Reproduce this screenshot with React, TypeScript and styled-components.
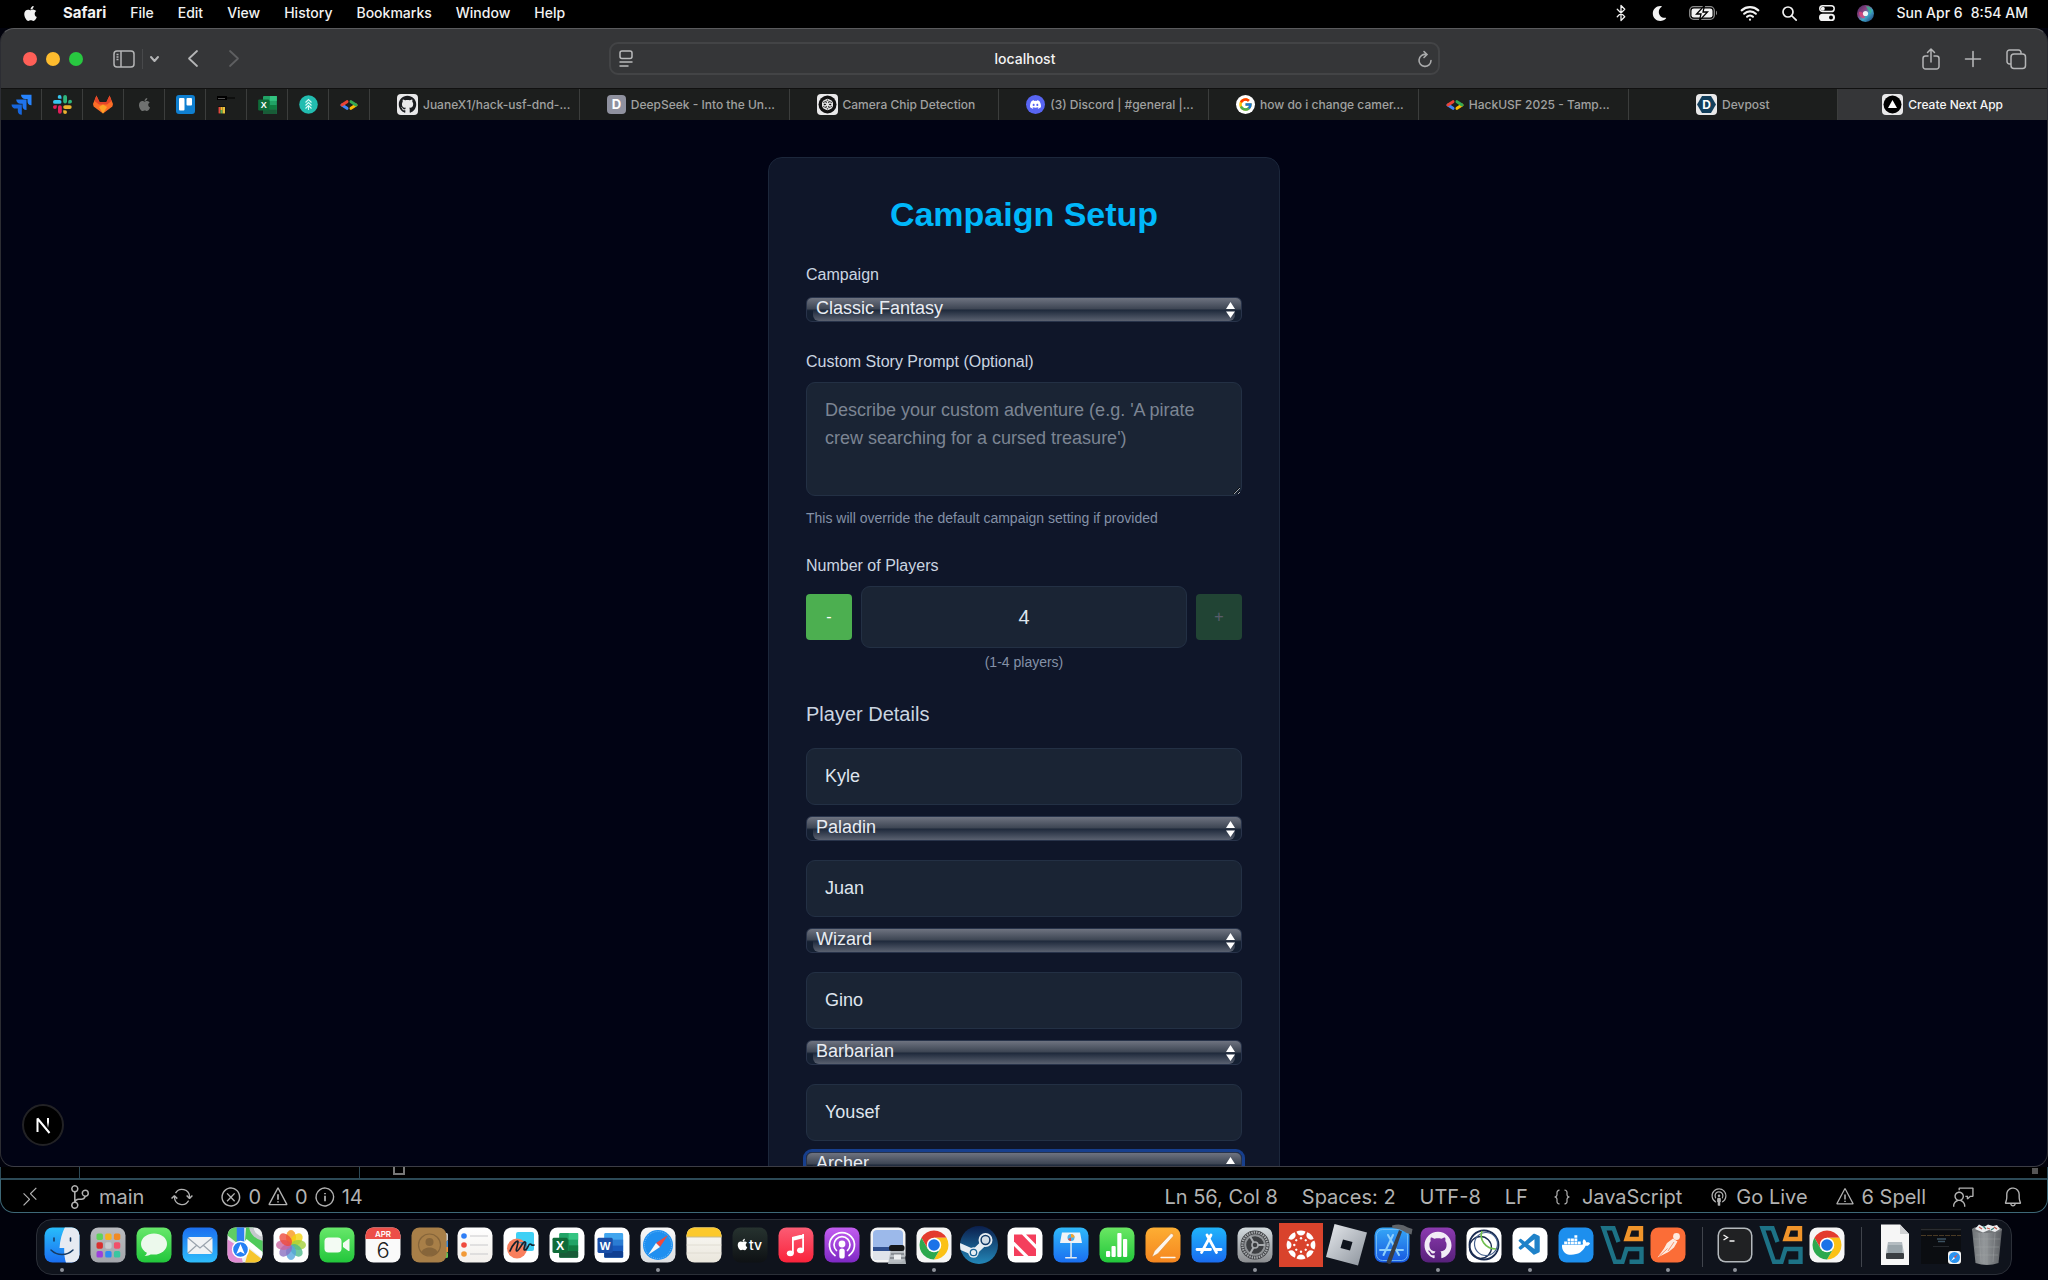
import React, { useState } from 'react';
import styled, { createGlobalStyle, css } from 'styled-components';
import { FaApple, FaMoon, FaDiscord, FaGithub, FaDocker } from 'react-icons/fa';
import { FcGoogle } from 'react-icons/fc';
import { SiGithub } from 'react-icons/si';
import { Bluetooth, Wifi } from 'lucide-react';
import {
  VscRemote,
  VscSourceControl,
  VscSync,
  VscError,
  VscWarning,
  VscInfo,
  VscBell,
  VscFeedback,
  VscBroadcast,
  VscJson,
  VscVscode,
} from 'react-icons/vsc';

const systemFont = 'Inter, "Liberation Sans", sans-serif';
const pageFont = '"Liberation Sans", Arial, sans-serif';

const GlobalStyle = createGlobalStyle`
  *, *::before, *::after { box-sizing: border-box; }
  body { margin: 0; background: #01020c; font-family: ${systemFont}; }
  button, input, select, textarea { font: inherit; color: inherit; margin: 0; }
  svg { display: block; flex: none; overflow: visible; }
`;

const Desktop = styled.div`
  display: flex;
  flex-direction: column;
  height: 100vh;
  overflow: hidden;
  background: #01020c;
`;

/* ---------- menu bar ---------- */

const MenuBar = styled.header`
  display: flex;
  justify-content: space-between;
  align-items: center;
  flex: none;
  height: 28px;
  padding: 0 20px 2px 22px;
  background: #000;
  color: #f2f2f2;
  font-size: 14px;
  font-weight: 500;
`;

const MenuGroup = styled.nav`
  display: flex;
  align-items: center;
  gap: 24px;
`;

const MenuItem = styled.button<{ $strong?: boolean }>`
  padding: 0;
  border: 0;
  background: none;
  line-height: 20px;
  font-size: ${(p) => (p.$strong ? 15 : 14)}px;
  font-weight: ${(p) => (p.$strong ? 700 : 500)};
`;

const StatusGroup = styled.div`
  display: flex;
  align-items: center;
  gap: 22px;
`;

const Clock = styled.time`
  display: flex;
  gap: 8px;
  line-height: 20px;
`;

/* ---------- browser window ---------- */

const BrowserWindow = styled.section`
  display: flex;
  flex-direction: column;
  flex: 1;
  min-height: 0;
  border: 1px solid #4b4c4e;
  border-color: #5a5b5d #2c2d33 #3c3d45;
  border-radius: 14px;
  overflow: hidden;
  background: #353638;
`;

const Toolbar = styled.div`
  display: grid;
  grid-template-columns: 1fr minmax(0, 831px) 1fr;
  align-items: center;
  flex: none;
  height: 59px;
  padding: 0 21px 0 22px;
`;

const ToolGroup = styled.div<{ $end?: boolean }>`
  display: flex;
  align-items: center;
  justify-content: ${(p) => (p.$end ? 'flex-end' : 'flex-start')};
  gap: ${(p) => (p.$end ? '25px' : '0')};
`;

const Lights = styled.div`
  display: flex;
  gap: 9px;
  margin-right: 30px;
`;

const Light = styled.button<{ $color: string }>`
  width: 14px;
  height: 14px;
  padding: 0;
  border: 0;
  border-radius: 50%;
  background: ${(p) => p.$color};
`;

const IconButton = styled.button`
  display: flex;
  padding: 0;
  border: 0;
  background: none;
  color: #b4b5b6;
`;

const ToolDivider = styled.span`
  width: 1px;
  height: 20px;
  margin: 0 7px;
  background: #48494b;
`;

const HistoryButtons = styled.div`
  display: flex;
  gap: 31px;
  margin-left: 29px;
`;

const AddressBar = styled.form`
  display: flex;
  align-items: center;
  height: 33px;
  padding: 0 5px 0 8px;
  border: 2px solid #434446;
  border-radius: 9px;
`;

const AddressInput = styled.input`
  flex: 1;
  min-width: 0;
  padding: 0;
  border: 0;
  outline: 0;
  background: none;
  color: #f3f3f3;
  font-size: 14px;
  font-weight: 500;
  line-height: 20px;
  text-align: center;
`;

const TabStrip = styled.nav`
  display: flex;
  flex: none;
  height: 32px;
  background: #1c1e1d;
  border-top: 1px solid #111;
`;

const PinnedTab = styled.button`
  display: grid;
  place-items: center;
  flex: none;
  width: 41px;
  padding: 0;
  border: 0;
  border-right: 1px solid #3b3d3c;
  background: none;
`;

const Tab = styled.button<{ $active?: boolean }>`
  display: grid;
  grid-template-columns: minmax(27px, 1fr) auto minmax(10px, 1fr);
  align-items: center;
  flex: 1 1 0;
  min-width: 0;
  padding: 0;
  border: 0;
  border-right: 1px solid #3b3d3c;
  background: ${(p) => (p.$active ? '#353638' : 'none')};
  color: ${(p) => (p.$active ? '#f5f5f5' : '#a0a1a0')};
  font-size: 12px;
  font-weight: 500;
  &:last-child { border-right: 0; }
`;

const TabBody = styled.span`
  grid-column: 2;
  display: flex;
  align-items: center;
  gap: 5px;
  white-space: nowrap;
`;

const Viewport = styled.main`
  position: relative;
  display: flex;
  justify-content: center;
  align-items: flex-start;
  flex: 1;
  min-height: 0;
  padding: 37px 16px 0;
  overflow: hidden;
  background: #010314;
  font-family: ${pageFont};
`;

const DevBadge = styled.button`
  position: absolute;
  left: 21px;
  bottom: 20px;
  display: grid;
  place-items: center;
  width: 42px;
  height: 42px;
  padding: 0;
  border: 2px solid #222225;
  border-radius: 50%;
  background: #000;
`;

/* ---------- campaign form ---------- */

const Card = styled.form`
  width: 512px;
  max-width: 100%;
  padding: 36px 37px;
  border: 1px solid #1c273b;
  border-radius: 14px;
  background: #0f1629;
  color: #cbd5e1;
`;

const Title = styled.h1`
  margin: 0 0 31px;
  color: #00b7fa;
  font-size: 34px;
  line-height: 40px;
  text-align: center;
`;

const Field = styled.div`
  display: flex;
  flex-direction: column;
  margin-bottom: 28px;
`;

const Label = styled.label`
  margin-bottom: 10px;
  font-size: 16px;
  line-height: 20px;
`;

const Hint = styled.p<{ $center?: boolean }>`
  margin: ${(p) => (p.$center ? '4px' : '12px')} 0 0;
  color: #8491a7;
  font-size: 14px;
  line-height: 20px;
  text-align: ${(p) => (p.$center ? 'center' : 'left')};
`;

const fieldBox = css`
  width: 100%;
  padding: 13px 18px;
  border: 1px solid #233044;
  border-radius: 9px;
  outline: 0;
  background: #1a2434;
  color: #dfe5ee;
  font-size: 18px;
  line-height: 28px;
`;

const Prompt = styled.textarea`
  ${fieldBox}
  display: block;
  height: 114px;
  resize: vertical;
  color-scheme: dark;
  &::placeholder { color: #7c8593; opacity: 1; }
`;

const NameInput = styled.input`
  ${fieldBox}
  height: 57px;
`;

const Stepper = styled.div`
  display: flex;
  align-items: center;
  gap: 9px;
`;

const StepButton = styled.button`
  flex: none;
  width: 46px;
  height: 46px;
  padding: 0;
  border: 0;
  border-radius: 4px;
  background: #4caf50;
  color: #fff;
  font-size: 16px;
  line-height: 20px;
  &:disabled { opacity: 0.3; }
`;

const CountInput = styled.input`
  ${fieldBox}
  flex: 1;
  min-width: 0;
  height: 62px;
  font-size: 20px;
  text-align: center;
`;

const SectionTitle = styled.h2`
  margin: 0 0 20px;
  font-size: 20px;
  font-weight: 400;
  line-height: 28px;
`;

const PlayerList = styled.div`
  display: flex;
  flex-direction: column;
  gap: 17px;
`;

const Player = styled.div`
  display: flex;
  flex-direction: column;
  gap: 9px;
`;

const SelectFrame = styled.div<{ $focused?: boolean }>`
  position: relative;
  height: 25px;
  margin: 2px 0;
  border: 1px solid #28334a;
  border-radius: 6px;
  background: linear-gradient(#6e7380, #3d4553 11px, #1d2839 12px, #152032 13px, #152032);
  ${(p) => p.$focused && 'box-shadow: 0 0 0 3px #173f8d;'}
  &::before {
    content: '';
    position: absolute;
    inset: 12px 6px 0;
    border-radius: 0 0 6px 6px;
    background: linear-gradient(#1e293b, #5a6170);
  }
`;

const Select = styled.select`
  position: relative;
  display: block;
  width: 100%;
  height: 23px;
  padding: 0 24px 3px 9px;
  border: 0;
  outline: 0;
  appearance: none;
  background: none;
  color: #e9edf3;
  font-size: 18px;
  line-height: 20px;
  option { background: #1a2434; }
`;

const SelectArrows = styled.svg`
  position: absolute;
  top: 4px;
  right: 6px;
  pointer-events: none;
`;

/* ---------- editor window behind the browser ---------- */

const EditorPeek = styled.div`
  display: flex;
  flex: none;
  height: 11px;
  border: solid #2c4a56;
  border-width: 0 1px;
  background: #000;
`;

const PeekPane = styled.div<{ $width: number }>`
  width: ${(p) => p.$width}px;
  border-right: 1px solid #2c4a56;
`;

const PeekBox = styled.div`
  width: 12px;
  height: 8px;
  margin-left: 33px;
  border: solid #777;
  border-width: 0 2px 2px;
`;

const PeekThumb = styled.div`
  width: 6px;
  height: 6px;
  margin: 1px 9px 0 auto;
  background: #555;
`;

const StatusBar = styled.footer`
  display: flex;
  justify-content: space-between;
  align-items: center;
  flex: none;
  height: 35px;
  padding: 1px 23px 0 18px;
  border: 1px solid #3d6877;
  border-top: 2px solid #2c4a56;
  border-radius: 0 0 14px 14px;
  background: #000;
  color: #b2b2b2;
  font-size: 20px;
  line-height: 24px;
`;

const StatusSide = styled.div`
  display: flex;
  align-items: center;
  gap: 27px;
`;

const DocumentInfo = styled.div`
  display: flex;
  align-items: center;
  gap: 24px;
`;

const StatusItem = styled.button<{ $gap?: number }>`
  display: flex;
  align-items: center;
  gap: ${(p) => p.$gap ?? 7}px;
  padding: 0;
  border: 0;
  background: none;
  white-space: nowrap;
`;

/* ---------- dock ---------- */

const DockBar = styled.nav`
  display: flex;
  flex: none;
  height: 56px;
  margin: 6px 36px 5px;
  padding: 0 1px 0 2px;
  border: 1px solid #2b2f38;
  border-radius: 16px;
  background: #0f131c;
`;

const DockItem = styled.button<{ $running?: boolean }>`
  display: flex;
  flex-direction: column;
  align-items: center;
  gap: 5px;
  flex: 1 1 0;
  min-width: 0;
  padding: 7px 0 0;
  border: 0;
  background: none;
  &::after {
    content: '';
    width: 4px;
    height: 4px;
    border-radius: 50%;
    background: ${(p) => (p.$running ? '#8f939b' : 'transparent')};
  }
`;

const DockDivider = styled.span`
  flex: none;
  width: 1px;
  height: 40px;
  margin: 7px 10px 0 11px;
  background: #40444c;
`;

/* ---------- drawings ---------- */

const SidebarIcon = () => (
  <svg width="22" height="18" viewBox="0 0 22 18" fill="none" stroke="currentColor" strokeWidth="1.5">
    <rect x="1" y="1" width="20" height="16" rx="3" />
    <path d="M8 1v16M3.5 4.5h2M3.5 7h2M3.5 9.5h2" />
  </svg>
);

const Chevron = ({ d, w, h, color = '#b4b5b6', sw = 1.8 }: { d: string; w: number; h: number; color?: string; sw?: number }) => (
  <svg width={w} height={h} viewBox={`0 0 ${w} ${h}`} fill="none" stroke={color} strokeWidth={sw} strokeLinecap="round" strokeLinejoin="round">
    <path d={d} />
  </svg>
);

const ReaderIcon = () => (
  <svg width="14" height="17" viewBox="0 0 14 17" fill="none" stroke="#b9babb" strokeWidth="1.5" strokeLinecap="round">
    <rect x="1" y="1" width="12" height="7.5" rx="2" />
    <path d="M1 12h12M1 16h8" />
  </svg>
);

const ReloadIcon = () => (
  <svg width="16" height="18" viewBox="0 0 16 18" fill="none" stroke="#a9aaab" strokeWidth="1.6" strokeLinecap="round">
    <path d="M9 4.5A6 6 0 1 0 14 10.5M7 1.5l3 3-3 3" />
  </svg>
);

const ShareIcon = () => (
  <svg width="18" height="22" viewBox="0 0 18 22" fill="none" stroke="currentColor" strokeWidth="1.5" strokeLinecap="round" strokeLinejoin="round">
    <path d="M6 8H3.5A2.5 2.5 0 0 0 1 10.5V18.5A2.5 2.5 0 0 0 3.5 21H14.5A2.5 2.5 0 0 0 17 18.5V10.5A2.5 2.5 0 0 0 14.5 8H12M9 14V1.5M5.5 4.5L9 1L12.5 4.5" />
  </svg>
);

const PlusIcon = () => (
  <svg width="16" height="16" viewBox="0 0 16 16" stroke="currentColor" strokeWidth="1.6" strokeLinecap="round">
    <path d="M8 .5v15M.5 8h15" />
  </svg>
);

const OverviewIcon = () => (
  <svg width="20" height="20" viewBox="0 0 20 20" fill="none" stroke="currentColor" strokeWidth="1.5">
    <rect x="5" y="5" width="14.5" height="14.5" rx="3" />
    <path d="M5 15H3.5A2.5 2.5 0 0 1 1 12.5V3.5A2.5 2.5 0 0 1 3.5 1H12.5A2.5 2.5 0 0 1 15 3.5V5" />
  </svg>
);

const BatteryIcon = () => (
  <svg width="29" height="14" viewBox="0 0 29 14">
    <rect x=".7" y=".7" width="24.6" height="12.6" rx="4" fill="none" stroke="#8b8b8b" strokeWidth="1.3" />
    <rect x="2.5" y="2.5" width="21" height="9" rx="2.3" fill="#f2f2f2" />
    <path d="M27 4.8c1.3.5 1.3 3.9 0 4.4z" fill="#8b8b8b" />
    <path d="M15.5 -.5L7.5 8H12L10.5 14.5 18.5 6H14z" fill="#f2f2f2" stroke="#000" strokeWidth="1.3" />
  </svg>
);

const SearchIcon = () => (
  <svg width="15" height="15" viewBox="0 0 15 15" fill="none" stroke="#f2f2f2" strokeWidth="1.7" strokeLinecap="round">
    <circle cx="6" cy="6" r="5" />
    <path d="M10 10l4.2 4.2" />
  </svg>
);

const ControlIcon = () => (
  <svg width="16" height="16" viewBox="0 0 16 16">
    <rect x=".8" y=".8" width="14.4" height="5.8" rx="2.9" fill="none" stroke="#f2f2f2" strokeWidth="1.5" />
    <circle cx="3.8" cy="3.7" r="2" fill="#f2f2f2" />
    <rect y="8.8" width="16" height="7.2" rx="3.6" fill="#f2f2f2" />
    <circle cx="12" cy="12.4" r="2" fill="#000" />
  </svg>
);

const SiriIcon = () => (
  <svg width="17" height="17" viewBox="0 0 17 17">
    <defs>
      <linearGradient id="siri" x1="0" y1="0" x2="1" y2="1">
        <stop offset="0" stopColor="#3b2a5e" />
        <stop offset=".35" stopColor="#8a4080" />
        <stop offset=".6" stopColor="#3fa7c8" />
        <stop offset="1" stopColor="#1b2e6e" />
      </linearGradient>
    </defs>
    <circle cx="8.5" cy="8.5" r="8.5" fill="url(#siri)" />
    <path d="M9 1c5 0 6 4 5 8-2-4-4-5-5-8z" fill="#39b58c" opacity=".8" />
    <path d="M2 7c3-1 5 1 6 6-3 1-6-1-6-6z" fill="#e0457c" opacity=".8" />
    <circle cx="8.5" cy="8.5" r="2.6" fill="#fff" opacity=".9" />
  </svg>
);

const JiraIcon = () => (
  <svg width="21" height="21" viewBox="0 0 21 21">
    <path d="M10 .8h10.5v10.5c-3 0-4-2-4-4V5h-2.3c-2.2 0-4.2-1.5-4.2-4.2z" fill="#2684ff" />
    <path d="M5.2 5.6h10.3v10.3c-3 0-4-2-4-4v-2.1H9.4c-2.2 0-4.2-1.5-4.2-4.2z" fill="#1f74ee" />
    <path d="M.5 10.4h10.3v10.3c-3 0-4-2-4-4v-2.1H4.7c-2.2 0-4.2-1.5-4.2-4.2z" fill="#1766dc" />
  </svg>
);

const SlackIcon = () => (
  <svg width="19" height="19" viewBox="0 0 19 19">
    <g fill="#36c5f0"><rect x="0" y="5" width="8.5" height="3.8" rx="1.9" /><path d="M8.5 3.8H6.6A1.9 1.9 0 1 1 8.5 1.9z" /></g>
    <g fill="#2eb67d"><rect x="10.2" y="0" width="3.8" height="8.5" rx="1.9" /><path d="M15.2 8.5V6.6A1.9 1.9 0 1 1 17.1 8.5z" /></g>
    <g fill="#ecb22e"><rect x="10.2" y="10.2" width="8.5" height="3.8" rx="1.9" /><path d="M10.2 15.2h1.9a1.9 1.9 0 1 1-1.9 1.9z" /></g>
    <g fill="#e01e5a"><rect x="5" y="10.2" width="3.8" height="8.5" rx="1.9" /><path d="M3.8 10.2v1.9A1.9 1.9 0 1 1 1.9 10.2z" /></g>
  </svg>
);

const GitlabIcon = () => (
  <svg width="20" height="19" viewBox="0 0 20 19">
    <path d="M10 18.5L.6 11.5 0 9 3.4.5 6.5 7h7L16.6.5 20 9l-.6 2.5z" fill="#fc6d26" />
    <path d="M3.4.5L6.5 7h7L16.6.5 18.5 6 14 9.5H6L1.5 6z" fill="#e24329" />
    <path d="M6 12l4-2.5 4 2.5-4 6.5z" fill="#fca326" />
  </svg>
);

const TrelloIcon = () => (
  <svg width="19" height="19" viewBox="0 0 19 19">
    <rect width="19" height="19" rx="3" fill="#0f7fd0" />
    <rect x="3" y="3" width="5.5" height="12.5" rx="1" fill="#fff" />
    <rect x="10.5" y="3" width="5.5" height="7.5" rx="1" fill="#fff" />
  </svg>
);

const SwatchIcon = () => (
  <svg width="19" height="18" viewBox="0 0 19 18">
    <rect width="10" height="4" fill="#000" />
    <path d="M1 2.5h7" stroke="#666" strokeWidth=".8" />
    <path d="M10 2h8" stroke="#000" strokeWidth="1" />
    <rect x="1" y="10" width="7.5" height="8" fill="#111" />
    <rect x="1.5" y="11" width="2" height="6.5" fill="#e04a3e" />
    <rect x="3.5" y="11" width="2" height="3" fill="#f6b62f" />
    <rect x="3.5" y="14" width="2" height="3.5" fill="#58b455" />
    <rect x="5.5" y="11" width="2.5" height="6.5" fill="#e9c23c" />
  </svg>
);

const ExcelMark = ({ x = 0, y = 0, s = 1 }: { x?: number; y?: number; s?: number }) => (
  <g transform={`translate(${x} ${y}) scale(${s})`}>
    <rect x="7" y="0" width="20" height="26" rx="1.5" fill="#21a366" />
    <rect x="17" y="0" width="10" height="7" fill="#33c481" />
    <rect x="7" y="7" width="10" height="12" fill="#107c41" />
    <rect x="7" y="19" width="20" height="7" rx="1" fill="#185c37" />
    <rect x="17" y="13" width="10" height="6" fill="#107c41" />
    <rect x="0" y="5" width="16" height="16" rx="1.5" fill="#0f6b38" />
    <text x="8" y="17.5" fontFamily="Liberation Sans" fontWeight="700" fontSize="13" fill="#fff" textAnchor="middle">X</text>
  </g>
);

const WordMark = () => (
  <g transform="translate(3.5 6) scale(.95)">
    <rect x="7" y="0" width="20" height="26" rx="1.5" fill="#41a5ee" />
    <rect x="7" y="7" width="20" height="6" fill="#2b7cd3" />
    <rect x="7" y="13" width="20" height="6" fill="#185abd" />
    <rect x="7" y="19" width="20" height="7" rx="1" fill="#103f91" />
    <rect x="0" y="5" width="16" height="16" rx="1.5" fill="#1a4fa8" />
    <text x="8" y="17.5" fontFamily="Liberation Sans" fontWeight="700" fontSize="12" fill="#fff" textAnchor="middle">W</text>
  </g>
);

const TreeIcon = () => (
  <svg width="19" height="19" viewBox="0 0 19 19" fill="none" stroke="#d7fbf5" strokeWidth="1.1">
    <circle cx="9.5" cy="9.5" r="9.3" fill="#22bdb0" stroke="none" />
    <path d="M6.5 7.5l3-3 3 3M6.5 10.5l3-3 3 3M6.5 13.5l3-3 3 3M9.5 10v5" />
  </svg>
);

const CodeMark = () => (
  <svg width="18" height="10" viewBox="0 0 18 10" fill="none" strokeWidth="3" strokeLinecap="round">
    <path d="M2 5L7 8.3" stroke="#4285f4" />
    <path d="M2 5L7 1.7" stroke="#ea4335" />
    <path d="M16 5L11 8.3" stroke="#fbbc04" />
    <path d="M16 5L11 1.7" stroke="#34a853" />
  </svg>
);

const PlateIcon = ({ children }: { children: React.ReactNode }) => (
  <svg width="21" height="21" viewBox="0 0 21 21">
    <rect width="21" height="21" rx="4" fill="#e9e9ea" />
    {children}
  </svg>
);

const Petals = ({ n, r, color, cx = 10.5, cy = 10.5 }: { n: number; r: number; color: string; cx?: number; cy?: number }) => (
  <>
    {Array.from({ length: n }, (_, i) => (
      <ellipse key={i} cx={cx} cy={cy - r * 0.5} rx={r * 0.5} ry={r * 0.45} fill="none" stroke={color} strokeWidth="1" transform={`rotate(${(360 / n) * i} ${cx} ${cy})`} />
    ))}
  </>
);

const ChromeMark = ({ cx = 18, cy = 18, r = 14.5 }: { cx?: number; cy?: number; r?: number }) => {
  const h = r * 0.866;
  const k = r / 2;
  return (
    <g transform={`translate(${cx} ${cy})`}>
      <path d={`M${-h} ${-k}A${r} ${r} 0 0 1 ${h} ${-k}L0 ${-k}L${-k * 0.866} ${k * 0.5}z`} fill="#e33b2e" />
      <path d={`M${h} ${-k}A${r} ${r} 0 0 1 0 ${r}L${k * 0.866} ${k * 0.5}L0 ${-k}z`} fill="#fbc116" />
      <path d={`M0 ${r}A${r} ${r} 0 0 1 ${-h} ${-k}L${-k * 0.866} ${k * 0.5}L${k * 0.866} ${k * 0.5}z`} fill="#2da94f" />
      <circle r={r * 0.5} fill="#fff" />
      <circle r={r * 0.4} fill="#1a73e8" />
    </g>
  );
};

const Art = ({ children }: { children: React.ReactNode }) => (
  <svg width="36" height="36" viewBox="0 0 36 36">{children}</svg>
);

const Tile = ({ id, from, to, children }: { id: string; from: string; to?: string; children?: React.ReactNode }) => (
  <Art>
    <defs>
      <linearGradient id={`t-${id}`} x1="0" y1="0" x2="0" y2="1">
        <stop offset="0" stopColor={from} />
        <stop offset="1" stopColor={to ?? from} />
      </linearGradient>
      <clipPath id={`c-${id}`}><rect x=".5" y=".5" width="35" height="35" rx="8" /></clipPath>
    </defs>
    <rect x=".5" y=".5" width="35" height="35" rx="8" fill={`url(#t-${id})`} />
    <g clipPath={`url(#c-${id})`}>{children}</g>
  </Art>
);

const SafariDial = () => (
  <>
    <circle cx="18" cy="18" r="15" fill="#1f8ff0" />
    <circle cx="18" cy="18" r="13.5" fill="none" stroke="#9ad3fb" strokeWidth="1" strokeDasharray=".6 1.5" />
    <path d="M28 8L20 20 16 16z" fill="#f0483e" />
    <path d="M8 28L20 20 16 16z" fill="#f4f6f8" />
  </>
);

const ParadigmArt = () => (
  <Art>
    <g transform="translate(-3.5 -1)" fill="none" strokeWidth="4.4">
      <path d="M18 16L13 2.2H3L14.5 35.8H22L26 23H41V35.8H29" stroke="#1d7286" />
      <path d="M26 13L29.5 2.2H40.5V13z" stroke="#f0942a" />
    </g>
  </Art>
);

const photoColors = ['#f8981d', '#f4d30e', '#a3cf3a', '#4cb98a', '#55a4dd', '#8a6fc0', '#c964a0', '#ee4b3c'];
const launchColors = ['#5fd35a', '#f5b320', '#f08a24', '#d92f2f', '#c9ccd0', '#f2506a', '#9b40dc', '#2d8cf0', '#3ac6a0'];

type DockEntry = { name: string; art: React.ReactNode; running?: boolean };

const chromeTile = (id: string) => (
  <Tile id={id} from="#f6f6f6"><ChromeMark /></Tile>
);

const mainApps: DockEntry[] = [
  { name: 'Finder', running: true, art: (
    <Tile id="finder" from="#28bdfb" to="#1a6ef0">
      <path d="M21 0H36V36H22C20.5 31 20 26 20.2 21H15.5C16 13 18 6 21 0z" fill="#e6ebf2" />
      <path d="M7 23c6 6 16 6 22 0" fill="none" stroke="#173a63" strokeWidth="1.5" strokeLinecap="round" />
      <path d="M10 11v3M26.5 11v3" stroke="#173a63" strokeWidth="1.6" strokeLinecap="round" />
    </Tile>) },
  { name: 'Launchpad', art: (
    <Tile id="launch" from="#b9bbc0" to="#a3a5ab">
      {launchColors.map((c, i) => (
        <rect key={c} x={6.5 + (i % 3) * 8.7} y={6.5 + Math.floor(i / 3) * 8.8} width="6.4" height="6.4" rx="1.6" fill={c} />
      ))}
    </Tile>) },
  { name: 'Messages', art: (
    <Tile id="msg" from="#67e86a" to="#22c63b">
      <ellipse cx="18" cy="17" rx="13" ry="10.5" fill="#ecf9ec" />
      <path d="M11 24c0 3-1 4-2.5 5 3.5 0 6-1 8-3z" fill="#ecf9ec" />
    </Tile>) },
  { name: 'Mail', art: (
    <Tile id="mail" from="#1c6ff0" to="#2fbdfb">
      <rect x="5.5" y="10" width="25" height="17" rx="2.5" fill="#f0f2f4" />
      <path d="M6 11l12 10 12-10M6 26l9-8M30 26l-9-8" fill="none" stroke="#9aa3ad" strokeWidth="1.2" />
    </Tile>) },
  { name: 'Maps', art: (
    <Tile id="maps" from="#eceff0">
      <path d="M0 0H10V16L0 8z" fill="#5fce63" />
      <path d="M0 12L12 20 16 36H0z" fill="#e08bd2" />
      <path d="M19 0H26C26 8 30 12 36 13V28L18 14z" fill="#4fca5b" />
      <path d="M22 22L36 33V36H18z" fill="#f6c52d" />
      <path d="M18 14L38 30" stroke="#fff" strokeWidth="5" />
      <path d="M24 -2a14 14 0 0 0 14 14" fill="none" stroke="#c4c8cc" strokeWidth="4" />
      <path d="M13.5 0V22" stroke="#2d7ff3" strokeWidth="7.5" />
      <circle cx="13.5" cy="22.5" r="8" fill="#2680f5" stroke="#fff" strokeWidth="1.4" />
      <path d="M13.5 17l4.2 10-4.2-2.2L9.3 27z" fill="#fff" />
    </Tile>) },
  { name: 'Photos', art: (
    <Tile id="photos" from="#fdfdfd">
      {photoColors.map((c, i) => (
        <ellipse key={c} cx="18" cy="10.5" rx="5" ry="7.5" fill={c} opacity=".8" transform={`rotate(${i * 45} 18 18)`} />
      ))}
    </Tile>) },
  { name: 'FaceTime', art: (
    <Tile id="ft" from="#67e86a" to="#22c63b">
      <rect x="5.5" y="10.5" width="17" height="15" rx="4" fill="#f3fbf3" />
      <path d="M24 16l5.5-4q1-.5 1 .6v10.8q0 1-1 .6L24 20z" fill="#f3fbf3" />
    </Tile>) },
  { name: 'Calendar', art: (
    <Tile id="cal" from="#fafafa">
      <rect width="36" height="12" fill="#ec4e48" />
      <text x="18" y="9.5" fontFamily="Inter" fontSize="8" fontWeight="600" fill="#fff" textAnchor="middle">APR</text>
      <text x="18" y="30.5" fontFamily="Inter" fontSize="22" fontWeight="300" fill="#222" textAnchor="middle">6</text>
    </Tile>) },
  { name: 'Contacts', art: (
    <Art>
      <rect x="30" y="6" width="7" height="8" rx="1.5" fill="#c8c8c8" /><rect x="30" y="14" width="7" height="6" fill="#3b8ad8" />
      <rect x="30" y="20" width="7" height="5" fill="#f0943a" /><rect x="30" y="25" width="7" height="6" rx="1.5" fill="#62c554" />
      <rect x=".5" y=".5" width="35" height="35" rx="8" fill="#a87f48" />
      <circle cx="18.5" cy="18" r="11" fill="none" stroke="#86653a" strokeWidth="1.2" />
      <circle cx="18.5" cy="15" r="4" fill="#86653a" /><path d="M10.5 25c2-6 14-6 16 0-4 5-12 5-16 0z" fill="#86653a" />
    </Art>) },
  { name: 'Reminders', art: (
    <Tile id="rem" from="#ffffff" to="#f2efeb">
      {['#2f7ef6', '#ef4b3e', '#f29a37'].map((c, i) => (
        <g key={c}><circle cx="7" cy={9 + i * 9} r="2.8" fill={c} /><path d={`M13 ${9 + i * 9}h18`} stroke="#c9c9cc" strokeWidth="1.2" /></g>
      ))}
    </Tile>) },
  { name: 'Freeform', art: (
    <Tile id="free" from="#ffffff">
      <rect x="13" y="5" width="18" height="19" rx="2" fill="#3fd0f5" />
      <circle cx="14" cy="21.5" r="10" fill="#f97f5d" />
      <path d="M13 15h11v9h-1a10 10 0 0 0-10-9z" fill="#4a8fb5" />
      <path d="M7 24c2-6 8-12 8-9s-3 9-1 9 6-10 8-9-3 8 0 8 3-6 5-6 1 2 4 1" fill="none" stroke="#16222c" strokeWidth="1.7" strokeLinecap="round" />
    </Tile>) },
  { name: 'Excel', art: <Tile id="xl" from="#ffffff"><ExcelMark x={3.5} y={6} s={0.95} /></Tile> },
  { name: 'Word', art: <Tile id="wd" from="#ffffff"><WordMark /></Tile> },
  { name: 'Safari', running: true, art: <Tile id="saf" from="#f8f8f8" to="#dddfe2"><SafariDial /></Tile> },
  { name: 'Notes', art: (
    <Tile id="notes" from="#fbfaf6" to="#eae6dc">
      <rect width="36" height="10" fill="#fcc92c" /><path d="M0 10h36" stroke="#c8b98c" strokeWidth="1" />
      <path d="M0 18h36M0 26h36" stroke="#dcd8cd" strokeWidth=".8" />
    </Tile>) },
  { name: 'TV', art: (
    <Tile id="tv" from="#26322f" to="#0e1114">
      <FaApple x={4} y={11} size={13} color="#fff" />
      <text x="23.5" y="23" fontFamily="Inter" fontSize="14" fontWeight="500" fill="#fff" textAnchor="middle">tv</text>
    </Tile>) },
  { name: 'Music', art: (
    <Tile id="music" from="#fb5c74" to="#fa233b">
      <path d="M14 10l12-3v4l-12 3zM14 10h1.8v16h-1.8zM24.2 7H26v16h-1.8z" fill="#fff" />
      <ellipse cx="12.3" cy="26.3" rx="3.5" ry="2.9" fill="#fff" /><ellipse cx="22.5" cy="23.3" rx="3.5" ry="2.9" fill="#fff" />
    </Tile>) },
  { name: 'Podcasts', art: (
    <Tile id="pod" from="#c35df0" to="#7e28c4">
      <g fill="none" stroke="#fff" strokeWidth="1.7" strokeLinecap="round">
        <path d="M11 28.5a12.5 12.5 0 1 1 14 0" /><path d="M12.5 23.5a8 8 0 1 1 11 0" />
      </g>
      <circle cx="18" cy="17" r="3.4" fill="#fff" /><rect x="15.3" y="21.5" width="5.4" height="10" rx="2.6" fill="#fff" />
    </Tile>) },
  { name: 'Preview', art: (
    <Art>
      <rect x=".5" y=".5" width="35" height="35" rx="7" fill="#f4f4f4" />
      <rect x="3" y="3" width="30" height="30" rx="4" fill="#9cb9ea" />
      <rect x="3" y="20" width="30" height="4" fill="#2f4f8f" /><path d="M3 24h30v5q0 4-4 4H7q-4 0-4-4z" fill="#dfe3ea" />
      <path d="M21 22h13l2 15H18z" fill="#b4b9bf" opacity=".95" /><rect x="19" y="18" width="15.5" height="6" rx="2.5" fill="#15171a" />
      <path d="M21 27h13M20 31h15" stroke="#5c6167" strokeWidth="1" /><rect x="24" y="27.5" width="7" height="5" fill="#eceef0" />
    </Art>) },
  { name: 'Chrome', running: true, art: chromeTile('chrome1') },
  { name: 'Steam', art: (
    <Art>
      <defs>
        <linearGradient id="steam" x1="0" y1="0" x2="0" y2="1"><stop offset="0" stopColor="#0b1f4d" /><stop offset="1" stopColor="#2387b8" /></linearGradient>
        <clipPath id="steam-disc"><circle cx="18" cy="18" r="19" /></clipPath>
      </defs>
      <circle cx="18" cy="18" r="19" fill="url(#steam)" />
      <g clipPath="url(#steam-disc)">
        <path d="M-3 18.5L13 25.5M13 25.5L25 14" stroke="#e8eef3" strokeWidth="6" fill="none" />
        <circle cx="24.5" cy="13" r="7" fill="#e8eef3" />
        <circle cx="24.5" cy="13" r="4.4" fill="#d3dde6" stroke="#123a68" strokeWidth="1.5" />
        <circle cx="12.5" cy="25.5" r="5.2" fill="#e8eef3" /><circle cx="12.5" cy="25.5" r="3.2" fill="none" stroke="#1c6495" strokeWidth="1.3" />
      </g>
    </Art>) },
  { name: 'News', art: (
    <Tile id="news" from="#ffffff">
      <path d="M7 7.5H15L29 22V29H21.5L7 14.5z" fill="#f43e5c" />
      <path d="M19 7.5H29V17.5z" fill="#f43e5c" /><path d="M7 19L17 29H7z" fill="#f43e5c" />
    </Tile>) },
  { name: 'Keynote', art: (
    <Tile id="key" from="#2fb9fb" to="#1a6ef0">
      <path d="M9 5.5H27L29 16H7z" fill="#f0f3f6" /><rect x="17.3" y="16" width="1.5" height="14" fill="#e3ebf2" />
      <rect x="12" y="30" width="12" height="1.5" rx=".7" fill="#e3ebf2" />
      <circle cx="18" cy="10.5" r="3.5" fill="#4bb3ea" /><path d="M18 10.5V7a3.5 3.5 0 0 1 3.5 3.5z" fill="#f5a52c" /><path d="M18 10.5V14A3.5 3.5 0 0 1 15 12z" fill="#e8473c" />
    </Tile>) },
  { name: 'Numbers', art: (
    <Tile id="num" from="#6ae763" to="#22c63b">
      {[[7, 6], [12.5, 11], [18.3, 24], [24, 18]].map(([x, h]) => <rect key={x} x={x} y={30 - h} width="4.2" height={h} rx="1" fill="#fff" />)}
    </Tile>) },
  { name: 'Pages', art: (
    <Tile id="pages" from="#fdae33" to="#f5861f">
      <path d="M7 30L9.5 24 26 6.5q2.5-.5 2.5 2.5L13 26.5z" fill="#fdf6ec" stroke="#d9802a" strokeWidth=".5" />
      <path d="M16 30.5h14" stroke="#fdf6ec" strokeWidth="1.3" strokeLinecap="round" />
    </Tile>) },
  { name: 'App Store', art: (
    <Tile id="store" from="#1fb4fb" to="#1a6cf0">
      <path d="M20 8L10.5 25.5M16 8l9.5 17.5M6 22.5h13.5M24 22.5h6" stroke="#fff" strokeWidth="2.8" strokeLinecap="round" fill="none" />
    </Tile>) },
  { name: 'System Settings', running: true, art: (
    <Tile id="set" from="#d3dade" to="#8b8d90">
      <circle cx="18" cy="18" r="14.5" fill="#3c3e41" />
      <circle cx="18" cy="18" r="12.6" fill="none" stroke="#a7aaad" strokeWidth="2.4" strokeDasharray="1.5 .9" />
      <circle cx="18" cy="18" r="9.8" fill="none" stroke="#8f9295" strokeWidth="2" />
      <path d="M18 18H28M18 18l-5 8.7M18 18l-5-8.7" stroke="#a7aaad" strokeWidth="2" />
      <circle cx="18" cy="18" r="3" fill="#3c3e41" stroke="#a7aaad" strokeWidth="1.6" />
    </Tile>) },
  { name: 'Canvas', art: (
    <Art>
      <rect x="-4" y="-4" width="44" height="44" fill="#d9432c" />
      {Array.from({ length: 8 }, (_, i) => (
        <g key={i} transform={`rotate(${i * 45} 18 18)`}>
          <path d="M13.5 4.6Q18 2.6 22.5 4.6Q21.5 8.5 18 8.5Q14.5 8.5 13.5 4.6z" fill="#fff" />
          <circle cx="18" cy="11.3" r="1.2" fill="#fff" />
        </g>
      ))}
    </Art>) },
  { name: 'Roblox', art: (
    <Art>
      <defs><linearGradient id="rbx" x1="0" y1="0" x2="1" y2="1"><stop offset="0" stopColor="#e7eaee" /><stop offset="1" stopColor="#8b929b" /></linearGradient></defs>
      <path d="M6.5 -3L39 5.5 30 38.5-2 30z" fill="url(#rbx)" /><path d="M15 12.5L24.5 15 22 23.5 12.5 21z" fill="#0e131c" />
    </Art>) },
  { name: 'Xcode', art: (
    <Art>
      <defs><linearGradient id="xc" x1="0" y1="0" x2="0" y2="1"><stop offset="0" stopColor="#36a8f7" /><stop offset="1" stopColor="#1757e0" /></linearGradient></defs>
      <rect x=".5" y=".5" width="35" height="35" rx="8" fill="url(#xc)" />
      <rect x="2.5" y="2.5" width="31" height="31" rx="6" fill="none" stroke="#7cc4fa" strokeWidth=".8" />
      <path d="M19 8L9.5 28M14 8l11 20M6 23h23" stroke="#8fd0fb" strokeWidth="2" fill="none" strokeLinecap="round" />
      <path d="M25 3L12.5 35q1.5 2.5 4 2L28 4.5z" fill="#3a3d42" />
      <path d="M18 -1.5q9-3 16 2l4.5 1.5-1 5.5-5-1.5q-5-4-14-5z" fill="#606469" />
    </Art>) },
  { name: 'GitHub Desktop', running: true, art: <Tile id="gh" from="#8c3ab0" to="#57207a"><SiGithub x={4.5} y={4.5} size={27} color="#f2ecf6" /></Tile> },
  { name: 'Circles', art: (
    <Tile id="circles" from="#ffffff">
      <circle cx="18" cy="18" r="14.5" fill="none" stroke="#1b2d52" strokeWidth="1.8" />
      <circle cx="14.5" cy="20.5" r="11" fill="none" stroke="#1b2d52" strokeWidth="1.3" />
      <circle cx="20" cy="17" r="11.5" fill="none" stroke="#45618e" strokeWidth="1.2" />
      <path d="M16 4c-3 8 3 18 14 18" fill="none" stroke="#6fbf4f" strokeWidth="1.7" />
    </Tile>) },
  { name: 'Visual Studio Code', running: true, art: <Tile id="vsc" from="#ffffff"><VscVscode x={5} y={5} size={26} color="#1f82c9" /></Tile> },
  { name: 'Docker', art: <Tile id="dock" from="#1d8fee"><FaDocker x={4} y={4} size={28} color="#fff" /></Tile> },
  { name: 'Visual Paradigm', art: <ParadigmArt /> },
  { name: 'Postman', running: true, art: (
    <Tile id="post" from="#fb6d37">
      <circle cx="26.5" cy="9.5" r="3.4" fill="#fde9df" />
      <path d="M23 11.5l4.5 3-3.5 6-5.500 4.500-11 5.500 6.500-9 3-5.500z" fill="#fde9df" />
      <path d="M9 29.5l8.500-8M18 24l6-9" stroke="#fb6d37" strokeWidth=".7" />
    </Tile>) },
];

const recentApps: DockEntry[] = [
  { name: 'Terminal', running: true, art: (
    <Art>
      <rect x=".5" y=".5" width="35" height="35" rx="8" fill="#b4b9bd" /><rect x="2" y="2" width="32" height="32" rx="6.5" fill="#202123" />
      <path d="M6.5 8l4 2.5-4 2.5M12.5 14h5" stroke="#f3f3f3" strokeWidth="1.4" fill="none" />
    </Art>) },
  { name: 'Visual Paradigm update', art: <ParadigmArt /> },
  { name: 'Chrome (recent)', art: chromeTile('chrome2') },
];

const dockFiles: DockEntry[] = [
  { name: 'Disk image', art: (
    <Art>
      <path d="M4 -2.5H23L32 7V38H4z" fill="#f6f6f6" /><path d="M23 -2.5L32 7H23z" fill="#cfd1d3" />
      <path d="M11 15h14l2 11H9z" fill="#b4bcc1" /><rect x="9" y="26" width="18" height="6" rx="1" fill="#3b3f43" />
      <rect x="11" y="18" width="14" height="8" fill="#98a3a9" />
    </Art>) },
  { name: 'Minimised window', art: (
    <Art>
      <rect x="-2" y="1" width="40" height="36" fill="#0b0d11" />
      <path d="M-2 2.5h40" stroke="#2a2c30" strokeWidth="1.5" /><path d="M-2 8.5h40" stroke="#4a3a24" strokeWidth="1.2" strokeDasharray="5 1" />
      <path d="M14 12h9M15 14.5h7" stroke="#3c5160" strokeWidth="1.5" /><path d="M10 19.5h16" stroke="#25282d" strokeWidth="1" />
      <rect x="25" y="24" width="13" height="13" rx="3" fill="#f3f3f3" /><circle cx="31.5" cy="30.5" r="5.5" fill="#2a93f0" />
      <path d="M35 27l-3 4.2L30.8 30z" fill="#f0483e" /><path d="M28 34l4-2.8L30.8 30z" fill="#fff" />
    </Art>) },
  { name: 'Bin', art: (
    <Art>
      <defs><linearGradient id="bin" x1="0" y1="0" x2="1" y2="0"><stop offset="0" stopColor="#6f7376" /><stop offset=".4" stopColor="#94989b" /><stop offset="1" stopColor="#5c5f63" /></linearGradient></defs>
      <path d="M3 2H33L29.5 36Q18 40 6.5 36z" fill="url(#bin)" />
      <path d="M10 6l2 29M18 6v31M26 6l-2 29M5 12h26M6 20h24M7 28h22" stroke="#a3a7aa" strokeWidth=".4" />
      <ellipse cx="18" cy="2.5" rx="15" ry="3.5" fill="#74777a" />
      <path d="M6 2L10-2.5 15 0 19-2.5 24-1 28-2 31 2 26 5 20 3 14 5.5z" fill="#eceef0" />
      <path d="M10 0l3 2M18 1l3 1M25 0l3 2" stroke="#c45a4d" strokeWidth="1.3" /><path d="M14-1l3 3M22 3l3-2" stroke="#3b7f7a" strokeWidth="1.2" />
    </Art>) },
];

const NextMark = () => (
  <svg width="16" height="16" viewBox="0 0 16 16" fill="none">
    <defs>
      <linearGradient id="nx" x1="0" y1="0" x2="0" y2="1"><stop offset=".4" stopColor="#fff" /><stop offset="1" stopColor="#fff" stopOpacity="0" /></linearGradient>
    </defs>
    <path d="M2.5 15V1.5L14.5 16" stroke="#fff" strokeWidth="2" strokeLinejoin="bevel" />
    <rect x="12" y="1" width="2" height="10" fill="url(#nx)" />
  </svg>
);

/* ---------- data ---------- */

const menus = ['File', 'Edit', 'View', 'History', 'Bookmarks', 'Window', 'Help'];

const pinned = [
  { name: 'Jira', icon: <JiraIcon /> },
  { name: 'Slack', icon: <SlackIcon /> },
  { name: 'GitLab', icon: <GitlabIcon /> },
  { name: 'Apple', icon: <FaApple size={15} color="#6f7170" /> },
  { name: 'Trello', icon: <TrelloIcon /> },
  { name: 'Palette', icon: <SwatchIcon /> },
  { name: 'Excel', icon: <svg width="19" height="18" viewBox="0 0 27 26"><ExcelMark /></svg> },
  { name: 'Trees', icon: <TreeIcon /> },
  { name: 'Developers', icon: <CodeMark /> },
];

const tabs = [
  { title: 'JuaneX1/hack-usf-dnd-...', icon: <PlateIcon><FaGithub x={1.5} y={1.5} size={18} color="#1b1d20" /></PlateIcon> },
  { title: 'DeepSeek - Into the Un...', icon: (
    <svg width="19" height="19" viewBox="0 0 19 19">
      <rect width="19" height="19" rx="4" fill="#8f919f" />
      <text x="9.5" y="14" fontFamily="Inter" fontWeight="700" fontSize="13" fill="#fff" textAnchor="middle">D</text>
    </svg>) },
  { title: 'Camera Chip Detection', icon: <PlateIcon><circle cx="10.5" cy="10.5" r="9" fill="#111" /><Petals n={6} r={5.5} color="#e4e4e4" /></PlateIcon> },
  { title: '(3) Discord | #general |...', icon: (
    <svg width="19" height="19" viewBox="0 0 19 19"><circle cx="9.5" cy="9.5" r="9.5" fill="#5865f2" /><FaDiscord x={3.5} y={3.5} size={12} color="#fff" /></svg>) },
  { title: 'how do i change camer...', icon: (
    <svg width="19" height="19" viewBox="0 0 19 19"><circle cx="9.5" cy="9.5" r="9.5" fill="#fff" /><FcGoogle x={2} y={2} size={15} /></svg>) },
  { title: 'HackUSF 2025 - Tamp...', icon: <CodeMark /> },
  { title: 'Devpost', icon: (
    <PlateIcon>
      <path d="M6 2h9l5 8.5-5 8.5H6L1 10.5z" fill="#123f5c" />
      <text x="10.5" y="15" fontFamily="Inter" fontWeight="700" fontSize="12" fill="#fff" textAnchor="middle">D</text>
    </PlateIcon>) },
  { title: 'Create Next App', icon: <PlateIcon><circle cx="10.5" cy="10.5" r="9" fill="#000" /><path d="M10.5 6l4.5 8H6z" fill="#fff" /></PlateIcon>, active: true },
];

const campaigns = ['Classic Fantasy', 'Space Opera', 'Haunted Manor'];
const classes = ['Paladin', 'Wizard', 'Barbarian', 'Archer'];

const startPlayers = [
  { name: 'Kyle', role: 'Paladin' },
  { name: 'Juan', role: 'Wizard' },
  { name: 'Gino', role: 'Barbarian' },
  { name: 'Yousef', role: 'Archer' },
];

const Dropdown = ({ options, focused, ...rest }: { options: string[]; focused?: boolean } & React.SelectHTMLAttributes<HTMLSelectElement>) => (
  <SelectFrame $focused={focused}>
    <Select {...rest}>
      {options.map((o) => <option key={o}>{o}</option>)}
    </Select>
    <SelectArrows width="9" height="16" viewBox="0 0 9 16" fill="#fff">
      <path d="M4.5 0L9 7H0zM0 9.5H9L4.5 16z" />
    </SelectArrows>
  </SelectFrame>
);

const CampaignForm = () => {
  const [count, setCount] = useState(4);
  const [players, setPlayers] = useState(startPlayers);
  const update = (i: number, patch: Partial<(typeof startPlayers)[number]>) =>
    setPlayers((list) => list.map((p, n) => (n === i ? { ...p, ...patch } : p)));

  return (
    <Card onSubmit={(e) => e.preventDefault()}>
      <Title>Campaign Setup</Title>
      <Field>
        <Label htmlFor="campaign">Campaign</Label>
        <Dropdown id="campaign" options={campaigns} defaultValue="Classic Fantasy" />
      </Field>
      <Field>
        <Label htmlFor="prompt">Custom Story Prompt (Optional)</Label>
        <Prompt id="prompt" placeholder="Describe your custom adventure (e.g. 'A pirate crew searching for a cursed treasure')" />
        <Hint>This will override the default campaign setting if provided</Hint>
      </Field>
      <Field>
        <Label htmlFor="count">Number of Players</Label>
        <Stepper>
          <StepButton type="button" disabled={count <= 1} onClick={() => setCount(count - 1)}>-</StepButton>
          <CountInput id="count" readOnly value={count} />
          <StepButton type="button" disabled={count >= 4} onClick={() => setCount(count + 1)}>+</StepButton>
        </Stepper>
        <Hint $center>(1-4 players)</Hint>
      </Field>
      <SectionTitle>Player Details</SectionTitle>
      <PlayerList>
        {players.slice(0, count).map((p, i) => (
          <Player key={i}>
            <NameInput aria-label={`Player ${i + 1} name`} value={p.name} onChange={(e) => update(i, { name: e.target.value })} />
            <Dropdown
              aria-label={`Player ${i + 1} class`}
              options={classes}
              value={p.role}
              focused={i === 3}
              onChange={(e) => update(i, { role: e.target.value })}
            />
          </Player>
        ))}
      </PlayerList>
    </Card>
  );
};

const DockApps = ({ items }: { items: DockEntry[] }) => (
  <>
    {items.map((a) => (
      <DockItem key={a.name} aria-label={a.name} $running={a.running}>{a.art}</DockItem>
    ))}
  </>
);

export default function App() {
  return (
    <Desktop>
      <GlobalStyle />
      <MenuBar>
        <MenuGroup>
          <FaApple size={17} />
          <MenuItem $strong>Safari</MenuItem>
          {menus.map((m) => <MenuItem key={m}>{m}</MenuItem>)}
        </MenuGroup>
        <StatusGroup>
          <Bluetooth size={18} strokeWidth={1.7} />
          <FaMoon size={15} />
          <BatteryIcon />
          <Wifi size={20} strokeWidth={2.6} />
          <SearchIcon />
          <ControlIcon />
          <SiriIcon />
          <Clock><span>Sun Apr 6</span><span>8:54 AM</span></Clock>
        </StatusGroup>
      </MenuBar>

      <BrowserWindow>
        <Toolbar>
          <ToolGroup>
            <Lights>
              <Light $color="#ff5f57" aria-label="Close" />
              <Light $color="#febc2e" aria-label="Minimise" />
              <Light $color="#28c840" aria-label="Zoom" />
            </Lights>
            <IconButton aria-label="Sidebar"><SidebarIcon /></IconButton>
            <ToolDivider />
            <IconButton aria-label="Tab groups"><Chevron w={9} h={6} d="M1 1l3.5 4L8 1" sw={2} /></IconButton>
            <HistoryButtons>
              <IconButton aria-label="Back"><Chevron w={10} h={17} d="M9 1L1 8.5 9 16" /></IconButton>
              <IconButton aria-label="Forward"><Chevron w={10} h={17} d="M1 1l8 7.5L1 16" color="#5e5f61" /></IconButton>
            </HistoryButtons>
          </ToolGroup>
          <AddressBar onSubmit={(e) => e.preventDefault()}>
            <ReaderIcon />
            <AddressInput aria-label="Address" defaultValue="localhost" />
            <IconButton type="button" aria-label="Reload"><ReloadIcon /></IconButton>
          </AddressBar>
          <ToolGroup $end>
            <IconButton aria-label="Share"><ShareIcon /></IconButton>
            <IconButton aria-label="New tab"><PlusIcon /></IconButton>
            <IconButton aria-label="Tab overview"><OverviewIcon /></IconButton>
          </ToolGroup>
        </Toolbar>
        <TabStrip>
          {pinned.map((p) => <PinnedTab key={p.name} aria-label={p.name}>{p.icon}</PinnedTab>)}
          {tabs.map((t) => (
            <Tab key={t.title} $active={t.active}>
              <TabBody>{t.icon}{t.title}</TabBody>
            </Tab>
          ))}
        </TabStrip>
        <Viewport>
          <CampaignForm />
          <DevBadge aria-label="Next.js tools"><NextMark /></DevBadge>
        </Viewport>
      </BrowserWindow>

      <EditorPeek>
        <PeekPane $width={79} />
        <PeekPane $width={280} />
        <PeekBox />
        <PeekThumb />
      </EditorPeek>
      <StatusBar>
        <StatusSide>
          <StatusItem aria-label="Remote"><VscRemote size={22} /></StatusItem>
          <StatusItem><VscSourceControl size={24} />main</StatusItem>
          <StatusItem aria-label="Sync"><VscSync size={22} /></StatusItem>
          <StatusItem $gap={6}>
            <VscError size={22} />0<VscWarning size={22} />0<VscInfo size={22} />14
          </StatusItem>
        </StatusSide>
        <StatusSide>
          <DocumentInfo>
            <StatusItem>Ln 56, Col 8</StatusItem>
            <StatusItem>Spaces: 2</StatusItem>
            <StatusItem>UTF-8</StatusItem>
            <StatusItem>LF</StatusItem>
            <StatusItem $gap={10}><VscJson size={20} />JavaScript</StatusItem>
          </DocumentInfo>
          <StatusItem><VscBroadcast size={20} />Go Live</StatusItem>
          <StatusItem><VscWarning size={20} />6 Spell</StatusItem>
          <StatusItem aria-label="Feedback"><VscFeedback size={22} /></StatusItem>
          <StatusItem aria-label="Notifications"><VscBell size={22} /></StatusItem>
        </StatusSide>
      </StatusBar>

      <DockBar>
        <DockApps items={mainApps} />
        <DockDivider />
        <DockApps items={recentApps} />
        <DockDivider />
        <DockApps items={dockFiles} />
      </DockBar>
    </Desktop>
  );
}
